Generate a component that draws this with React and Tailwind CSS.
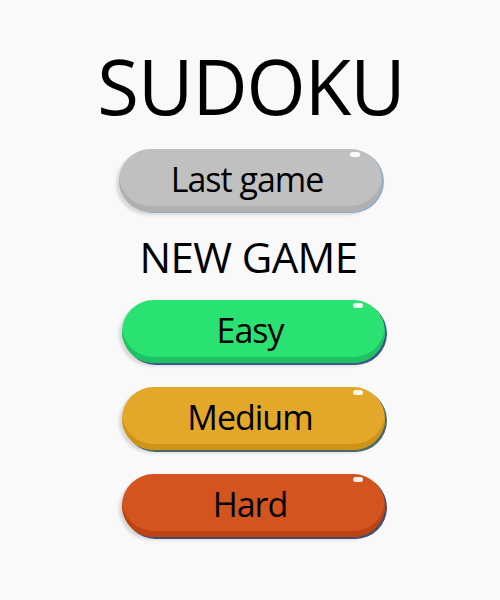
const buttons = [
    { label: 'Easy', face: 'bg-[#2ae271]', edge: 'shadow-[inset_0_-6px_0_#1fc262,2px_2px_0_#3b5a8a,-3px_3px_3px_#d8d8d8]' },
    { label: 'Medium', face: 'bg-[#e3a82a]', edge: 'shadow-[inset_0_-6px_0_#cf9318,2px_2px_0_#4a6a6a,-3px_3px_3px_#d8d8d8]' },
    { label: 'Hard', face: 'bg-[#d4541f]', edge: 'shadow-[inset_0_-6px_0_#bd4412,2px_2px_0_#4a4a6a,-3px_3px_3px_#d8d8d8]' },
];

function PillButton({ label, face, edge, className = '' }) {
    return (
        <button className={`relative w-[263px] h-[63px] rounded-full ${face} ${edge} flex items-center justify-center pr-[7px] text-[34px] tracking-[-1px] leading-none text-black ${className}`}>
            <span className="absolute right-[22px] top-[3px] w-[10px] h-[5px] rounded-full bg-white/90" />
            <span className="-mt-[4px]">{label}</span>
        </button>
    );
}

export default function App() {
    return (
        <div className="w-[500px] h-[600px] bg-[#f9f9f9] flex flex-col items-center font-['Open_Sans',sans-serif]">
            <h1 className="mt-[40px] ml-[2px] text-[76px] leading-none tracking-[-1px] text-black h-[92px] flex items-center">SUDOKU</h1>
            <PillButton
                label="Last game"
                face="bg-[#c0c0c0]"
                edge="shadow-[inset_0_-6px_0_#b0b0b0,2px_1px_0_#8fb0c8,-3px_3px_3px_#d8d8d8]"
                className="mt-[17px] ml-[1px]"
            />
            <h2 className="mt-[24px] -ml-[3px] text-[42px] leading-none tracking-[-0.6px] text-black">NEW GAME</h2>
            <div className="mt-[22px] ml-[7px] flex flex-col gap-[24px]">
                {buttons.map((b) => (
                    <PillButton key={b.label} {...b} />
                ))}
            </div>
        </div>
    );
}
